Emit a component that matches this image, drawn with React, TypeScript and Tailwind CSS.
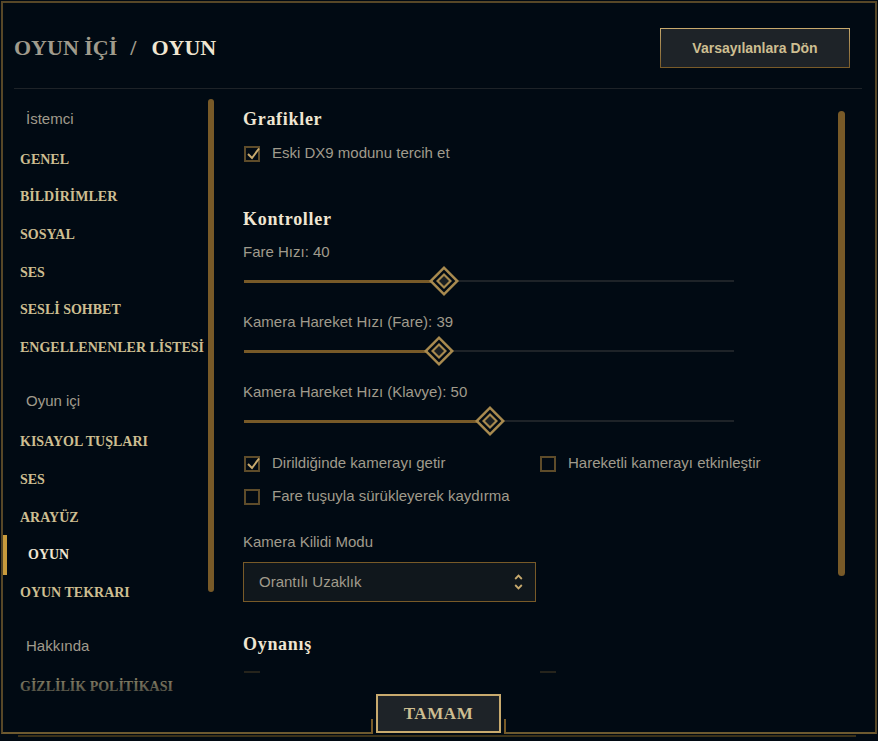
import React from "react";

const SERIF = "font-['Liberation_Serif',serif]";

function Check({ checked, label, w }: { checked?: boolean; label: string; w?: string }) {
  return (
    <div className={`flex items-center h-[24px] ${w ?? ""}`}>
      <div className="relative ml-[1px] w-[16px] h-[16px] border-2 border-[#5e4c2a] shrink-0">
        {checked && (
          <svg className="absolute left-[-1px] top-[-3px]" width="17" height="17" viewBox="0 0 17 17">
            <path d="M3 9 L7 13 L14 3.5" fill="none" stroke="#c8aa6e" strokeWidth="2" />
          </svg>
        )}
      </div>
      {label && <span className="ml-[12px] text-[15px] text-[#a09b8c] whitespace-nowrap">{label}</span>}
    </div>
  );
}

function Slider({ label, value }: { label: string; value: number }) {
  const center = 16 + (value / 100) * 460;
  return (
    <div>
      <div className="h-[20px] leading-[20px] text-[15px] text-[#a09b8c]">{label}</div>
      <div className="relative mt-[4px] h-[30px] w-[490px] ml-[1px]">
        <div className="absolute left-0 right-0 top-[14px] h-[2px] bg-[#1e2328]" />
        <div className="absolute left-0 top-[13.5px] h-[3px] bg-[#785a28]" style={{ width: center }} />
        <svg
          className="absolute top-0"
          style={{ left: center - 15 }}
          width="30"
          height="30"
          viewBox="0 0 30 30"
        >
          <path d="M15 0 L30 15 L15 30 L0 15 Z" fill="#a88a4f" />
          <path d="M15 3.6 L26.4 15 L15 26.4 L3.6 15 Z" fill="#010a13" />
          <path d="M15 7 L23 15 L15 23 L7 15 Z" fill="#a88a4f" />
          <path d="M15 10 L20 15 L15 20 L10 15 Z" fill="#1a1f22" />
        </svg>
      </div>
    </div>
  );
}

function NavHeader({ text, first }: { text: string; first?: boolean }) {
  return (
    <div className={`h-[42.5px] flex items-center pl-[23px] text-[15px] text-[#a09b8c] ${first ? "" : "mt-[14px]"}`}>
      {text}
    </div>
  );
}

function NavItem({ text, active }: { text: string; active?: boolean }) {
  return (
    <div
      className={`relative h-[37.7px] flex items-center ${SERIF} font-bold text-[14px] whitespace-nowrap ${
        active ? "pl-[25px] text-[#f0e6d2]" : "pl-[17px] text-[#cdbe91]"
      }`}
    >
      {active && <div className="absolute left-0 top-[-1px] w-[4px] h-[40px] bg-[#c89b3c]" />}
      {text}
    </div>
  );
}

export default function App() {
  return (
    <div className="relative w-[878px] h-[741px] overflow-hidden bg-[#010a13] pt-[1px] pl-[1px] font-['Liberation_Sans',Arial,sans-serif]">
      <div className="w-[876px] h-[733px] border-2 border-[#574727] border-b-[#6e5a30] flex flex-col">
        {/* Header */}
        <div className="h-[85px] pt-[5px] flex items-center justify-between pl-[11px] pr-[25px] shrink-0">
          <div className={`${SERIF} font-bold text-[22px] leading-none whitespace-nowrap`}>
            <span className="text-[#a09b8c]">OYUN İÇİ</span>
            <span className="text-[#a09b8c] ml-[13px] mr-[15px]">/</span>
            <span className="text-[#f0e6d2]">OYUN</span>
          </div>
          <div className="w-[190px] h-[40px] p-[1px] bg-linear-to-b from-[#c8aa6e] to-[#785a28]">
            <div className="w-full h-full bg-[#1e2328] flex items-center justify-center text-[14px] font-bold text-[#cdbe91]">
              Varsayılanlara Dön
            </div>
          </div>
        </div>
        <div className="h-px bg-[#1e2328] ml-[11px] mr-[13px] shrink-0" />

        {/* Body */}
        <div className="flex h-[623px] shrink-0">
          {/* Nav */}
          <div className="relative w-[215px] flex shrink-0 overflow-hidden">
            <div className="w-[205px] pt-[8.75px]">
              <NavHeader text="İstemci" first />
              <NavItem text="GENEL" />
              <NavItem text="BİLDİRİMLER" />
              <NavItem text="SOSYAL" />
              <NavItem text="SES" />
              <NavItem text="SESLİ SOHBET" />
              <NavItem text="ENGELLENENLER LİSTESİ" />
              <NavHeader text="Oyun içi" />
              <NavItem text="KISAYOL TUŞLARI" />
              <NavItem text="SES" />
              <NavItem text="ARAYÜZ" />
              <NavItem text="OYUN" active />
              <NavItem text="OYUN TEKRARI" />
              <NavHeader text="Hakkında" />
              <NavItem text="GİZLİLİK POLİTİKASI" />
            </div>
            <div className="w-[6px] h-[493px] mt-[10px] rounded-full bg-[#785a28] shrink-0" />
            <div className="absolute left-0 right-0 bottom-0 h-[50px] bg-linear-to-b from-transparent to-[#010a13]" />
          </div>

          {/* Content */}
          <div className="flex pl-[25px]">
            <div className="w-[595px] h-[584px] overflow-hidden pt-[18px]">
              <div className={`h-[24px] leading-[24px] ${SERIF} font-bold text-[18px] tracking-[0.7px] text-[#f0e6d2]`}>
                Grafikler
              </div>
              <div className="mt-[10.5px]">
                <Check checked label="Eski DX9 modunu tercih et" />
              </div>
              <div className={`mt-[41.5px] h-[24px] leading-[24px] ${SERIF} font-bold text-[18px] tracking-[0.7px] text-[#f0e6d2]`}>
                Kontroller
              </div>
              <div className="mt-[11px] flex flex-col gap-[16px]">
                <Slider label="Fare Hızı: 40" value={40} />
                <Slider label="Kamera Hareket Hızı (Fare): 39" value={39} />
                <Slider label="Kamera Hareket Hızı (Klavye): 50" value={50} />
              </div>
              <div className="mt-[15.5px] flex">
                <Check checked label="Dirildiğinde kamerayı getir" w="w-[296px]" />
                <Check label="Hareketli kamerayı etkinleştir" />
              </div>
              <div className="mt-[9px]">
                <Check label="Fare tuşuyla sürükleyerek kaydırma" />
              </div>
              <div className="mt-[23.5px] h-[20px] leading-[20px] text-[15px] text-[#a09b8c]">Kamera Kilidi Modu</div>
              <div className="mt-[10px] w-[293px] h-[40px] border border-[#785a28] bg-[#10171c] flex items-center justify-between pl-[15px] pr-[12px]">
                <span className="text-[15px] text-[#a09b8c]">Orantılı Uzaklık</span>
                <svg width="9" height="16" viewBox="0 0 9 16">
                  <path d="M1.2 5 L4.5 1.6 L7.8 5" fill="none" stroke="#c8aa6e" strokeWidth="1.8" />
                  <path d="M1.2 11 L4.5 14.4 L7.8 11" fill="none" stroke="#c8aa6e" strokeWidth="1.8" />
                </svg>
              </div>
              <div className={`mt-[30px] h-[24px] leading-[24px] ${SERIF} font-bold text-[18px] tracking-[0.7px] text-[#f0e6d2]`}>
                Oynanış
              </div>
              <div className="mt-[11px] flex opacity-40">
                <Check label="" w="w-[296px]" />
                <Check label="" />
              </div>
            </div>
            <div className="w-[7px] h-[465px] mt-[22px] rounded-full bg-[#785a28] shrink-0" />
          </div>
        </div>
      </div>
      <div className="ml-[17px] mt-[1px] w-[838px] h-[2px] bg-[#3b3119]" />

      {/* Bottom button over frame */}
      <div className="absolute left-[371px] top-[719px] w-[135px] h-[15px] bg-[#010a13] border-l-2 border-r-2 border-[#785a28]" />
      <div className="absolute left-[376px] top-[694px] w-[125px] h-[39px] border-2 border-[#c8aa6e] bg-[#1e2328] flex items-center justify-center">
        <span className={`${SERIF} font-bold text-[17px] tracking-[0.6px] text-[#cdbe91]`}>TAMAM</span>
      </div>
    </div>
  );
}
